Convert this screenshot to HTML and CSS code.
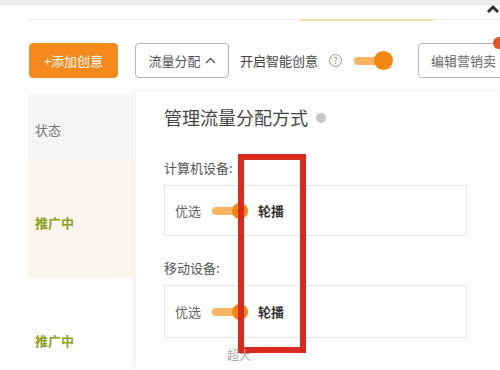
FILE: index.html
```html
<!DOCTYPE html>
<html lang="zh">
<head>
<meta charset="utf-8">
<link rel="stylesheet" href="styles.css">
</head>
<body>
<div class="screen">
  <div class="topbar"></div>
  <svg class="caret-top" width="14" height="9" viewBox="0 0 14 9"><path d="M2 8 L7 3 L12 8" fill="none" stroke="#333" stroke-width="3"/></svg>
  <div class="page">
    <div class="tabline"><span class="tab-active"></span></div>
    <div class="toolbar">
      <button class="btn btn-primary">+添加创意</button>
      <button class="btn btn-outline">流量分配 <svg class="chev" width="11" height="7" viewBox="0 0 11 7"><path d="M1 6 L5.5 1.5 L10 6" fill="none" stroke="#555" stroke-width="1.4"/></svg></button>
      <span class="smart">开启智能创意</span>
      <span class="help">?</span>
      <span class="switch switch-top"><span class="knob"></span></span>
      <button class="btn btn-outline btn-edit">编辑营销卖</button>
      <span class="badge"></span>
    </div>
    <div class="table">
      <div class="th">状态</div>
      <div class="tr tr-cream"><span class="status">推广中</span></div>
      <div class="tr"><span class="status">推广中</span></div>
    </div>
  </div>

  <div class="popover">
    <div class="pop-title">管理流量分配方式 <span class="dot"></span></div>
    <div class="label">计算机设备:</div>
    <div class="choice">
      <span class="opt">优选</span>
      <span class="switch"><span class="knob"></span></span>
      <span class="opt opt-on">轮播</span>
    </div>
    <div class="label label-2">移动设备:</div>
    <div class="choice choice-2">
      <span class="opt">优选</span>
      <span class="switch"><span class="knob"></span></span>
      <span class="opt opt-on">轮播</span>
    </div>
  </div>

  <div class="highlight"></div>
  <div class="watermark">超大</div>
</div>
</body>
</html>
```

FILE: styles.css
```css
* { box-sizing: border-box; }
html, body { margin: 0; padding: 0; }
body {
  width: 500px;
  height: 370px;
  overflow: hidden;
  background: #fff;
  font-family: "Noto Sans CJK SC", "Noto Sans", sans-serif;
  color: #555;
}
.screen { position: relative; width: 500px; height: 370px; overflow: hidden; }
.topbar { height: 5px; background: #ebebeb; }
.caret-top { position: absolute; right: 0; top: 4px; }

.page { padding-left: 28px; }
.tabline {
  margin-top: 14px;
  height: 1px;
  background: #ededed;
  position: relative;
}
.tab-active {
  display: block;
  margin-left: 272px;
  width: 133px;
  height: 2px;
  background: #f3dfa8;
}

.toolbar {
  margin-top: 23px;
  height: 35px;
  display: flex;
  align-items: center;
  padding-left: 1px;
  position: relative;
  white-space: nowrap;
}
.toolbar > * { flex: none; }
.btn {
  height: 35px;
  font-family: inherit;
  font-size: 13px;
  border-radius: 4px;
  padding: 0;
  display: flex;
  align-items: center;
  justify-content: center;
  gap: 4px;
}
.btn-primary {
  width: 89px;
  background: #f6891b;
  border: 1px solid #f6891b;
  color: #fff;
}
.btn-outline {
  width: 94px;
  margin-left: 17px;
  background: #fff;
  border: 1px solid #b5b5b5;
  color: #555;
}
.chev { margin-top: -1px; }
.smart { margin-left: 11px; font-size: 13px; color: #444; }
.help {
  margin-left: 11px;
  width: 13px;
  height: 13px;
  border: 1px solid #999;
  border-radius: 50%;
  font-size: 9px;
  line-height: 11px;
  text-align: center;
  color: #888;
}
.switch {
  position: relative;
  width: 36px;
  height: 18px;
  display: inline-block;
  flex: none;
}
.switch::before {
  content: "";
  position: absolute;
  left: 0;
  top: 5px;
  width: 30px;
  height: 8px;
  border-radius: 4px;
  background: #f9b460;
}
.switch .knob {
  position: absolute;
  right: 0;
  top: 1px;
  width: 16px;
  height: 16px;
  border-radius: 50%;
  background: #f5860e;
}
.switch-top { margin-left: 12px; width: 39px; height: 20px; }
.switch-top::before { top: 6px; width: 32px; }
.switch-top .knob { width: 19px; height: 19px; top: 0; }
.btn-edit { margin-left: 25px; width: 100px; justify-content: flex-start; padding-left: 12px; color: #666; }
.badge {
  position: absolute;
  left: 465px;
  top: -6px;
  width: 12px;
  height: 12px;
  border-radius: 50%;
  background: #e0562a;
}

.table {
  margin-top: 17px;
  width: 105px;
}
.th {
  height: 65px;
  background: #f5f5f5;
  font-size: 13px;
  color: #777;
  padding-left: 7px;
  display: flex;
  align-items: center;
  padding-top: 4px;
}
.tr {
  height: 118px;
  display: flex;
  align-items: center;
  padding-left: 7px;
  padding-top: 6px;
}
.tr-cream { background: #fcf5ec; }
.status { font-size: 13px; color: #8da21d; font-weight: bold; }

.popover {
  position: absolute;
  left: 136px;
  top: 92px;
  right: 0;
  bottom: 0;
  background: #fff;
  box-shadow: -2px -1px 5px rgba(0, 0, 0, 0.07);
  padding: 13px 0 0 28px;
}
.pop-title {
  font-size: 18px;
  line-height: 24px;
  color: #444;
  display: flex;
  align-items: center;
  gap: 8px;
}
.dot {
  width: 10px;
  height: 10px;
  border-radius: 50%;
  background: #c8c8c8;
  margin-top: 2px;
}
.label {
  margin-top: 29px;
  font-size: 13px;
  line-height: 20px;
  color: #555;
}
.label-2 { margin-top: 22px; }
.choice {
  margin-top: 7px;
  width: 303px;
  height: 51px;
  border: 1px solid #e6e6e6;
  display: flex;
  align-items: center;
  padding-left: 10px;
}
.choice-2 { height: 53px; }
.opt { font-size: 13px; color: #666; }
.choice .switch { margin-left: 11px; }
.opt-on { margin-left: 10px; color: #333; font-weight: bold; }

.highlight {
  position: absolute;
  left: 238px;
  top: 154px;
  width: 68px;
  height: 199px;
  border: 6px solid #d92a1f;
}
.watermark {
  position: absolute;
  left: 227px;
  top: 347px;
  font-size: 12px;
  line-height: 16px;
  color: #aaa;
}
```
